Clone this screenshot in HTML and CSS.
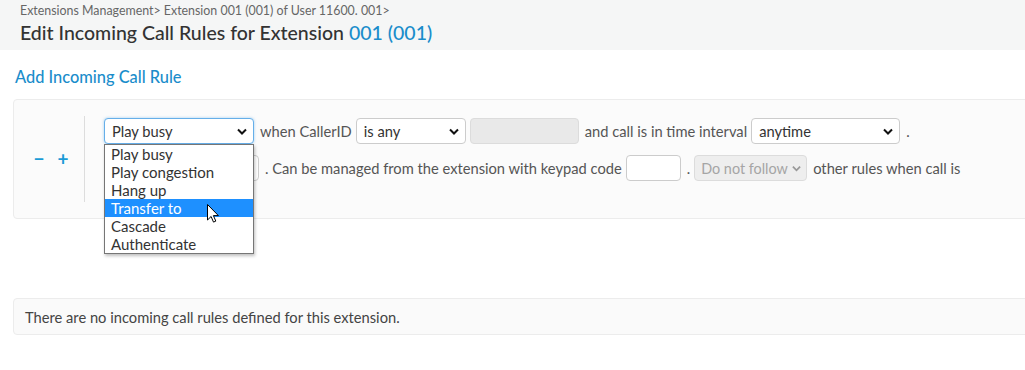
FILE: index.html
```html
<!DOCTYPE html>
<html lang="en">
<head>
    <meta charset="UTF-8">
    <meta name="viewport" content="width=device-width, initial-scale=1.0">
    <title>Edit Incoming Call Rules</title>
    <link rel="stylesheet" href="styles.css">
</head>
<body>
    <div class="page-header">
        <div class="breadcrumb">Extensions Management&gt; Extension 001 (001) of User 11600. 001&gt;</div>
        <h1 class="page-title">Edit Incoming Call Rules for Extension <span class="accent">001 (001)</span></h1>
    </div>

    <div class="content">
        <h2 class="section-title">Add Incoming Call Rule</h2>

        <div class="rule-panel">
            <div class="rule-controls">
                <span class="ctrl">&minus;</span>
                <span class="ctrl">+</span>
            </div>
            <div class="rule-body">
                <div class="rule-row">
                    <div class="select select-focus select-action">
                        <span>Play busy</span>
                        <svg class="chev" viewBox="0 0 10 6"><path d="M1 1l4 4 4-4" /></svg>
                    </div>
                    <span class="label">when CallerID</span>
                    <div class="select select-callerid">
                        <span>is any</span>
                        <svg class="chev" viewBox="0 0 10 6"><path d="M1 1l4 4 4-4" /></svg>
                    </div>
                    <div class="input input-disabled input-callerid"></div>
                    <span class="label">and call is in time interval</span>
                    <div class="select select-interval">
                        <span>anytime</span>
                        <svg class="chev" viewBox="0 0 10 6"><path d="M1 1l4 4 4-4" /></svg>
                    </div>
                    <span class="label">.</span>
                </div>
                <div class="rule-row">
                    <div class="select select-target"></div>
                    <span class="label">. Can be managed from the extension with keypad code</span>
                    <div class="input input-code"></div>
                    <span class="label">.</span>
                    <div class="select select-disabled select-follow">
                        <span>Do not follow</span>
                        <svg class="chev" viewBox="0 0 10 6"><path d="M1 1l4 4 4-4" /></svg>
                    </div>
                    <span class="label">other rules when call is</span>
                </div>

                <!-- open dropdown of the action select -->
                <ul class="dropdown">
                    <li>Play busy</li>
                    <li>Play congestion</li>
                    <li>Hang up</li>
                    <li class="active">Transfer to</li>
                    <li>Cascade</li>
                    <li>Authenticate</li>
                </ul>
                <svg class="cursor" viewBox="0 0 12 19" width="12" height="19">
                    <path d="M0.5 0.5v15.5l3.6-3.5 2.4 5.6 2.3-1-2.4-5.5h5z" fill="#fff" stroke="#000" stroke-width="1" stroke-linejoin="round" />
                </svg>
            </div>
        </div>

        <div class="empty-box">There are no incoming call rules defined for this extension.</div>
    </div>
</body>
</html>
```

FILE: styles.css
```css
/* Global styles */
body {
    margin: 0;
    padding: 0;
    font-family: 'Lato', 'Noto Sans', sans-serif;
    color: #555;
    background: #fff;
    overflow: hidden;
}

/* Header */
.page-header {
    background-color: #f5f6f6;
    height: 50px;
    padding: 3px 20px 0;
    box-sizing: border-box;
}

.breadcrumb {
    font-size: 12.4px;
    color: #666;
    line-height: 16px;
}

.page-title {
    margin: 2px 0 0;
    font-size: 19.5px;
    font-weight: 500;
    color: #333;
    line-height: 24px;
}

.accent {
    color: #1a8dcb;
}

/* Content */
.content {
    padding: 0 0 0 13px;
}

.section-title {
    margin: 17px 0 0 2px;
    font-size: 16.4px;
    font-weight: 500;
    color: #1a8dcb;
    line-height: 20px;
}

.rule-panel {
    margin-top: 12px;
    margin-right: -20px;
    height: 120px;
    box-sizing: border-box;
    background-color: #fbfbfb;
    border: 1px solid #ececec;
    border-radius: 4px;
    display: flex;
    align-items: flex-start;
    padding-top: 16px;
}

.rule-controls {
    width: 71px;
    height: 86px;
    border-right: 1px solid #ddd;
    display: flex;
    align-items: center;
    justify-content: center;
    gap: 13px;
    padding-left: 4px;
    box-sizing: border-box;
}

.ctrl {
    color: #1a9ad6;
    font-size: 19px;
    font-weight: bold;
    line-height: 20px;
}

.rule-body {
    position: relative;
    padding-left: 19px;
    padding-top: 2px;
    display: flex;
    flex-direction: column;
    gap: 11px;
}

.rule-row {
    display: flex;
    align-items: center;
    gap: 4px;
    white-space: nowrap;
    height: 26px;
}

.label {
    font-size: 14.7px;
    color: #555;
    padding: 0 0 0 2px;
}

/* Form controls */
.select,
.input {
    height: 26px;
    box-sizing: border-box;
    border: 1px solid #ccc;
    border-radius: 4px;
    background: #fff;
    display: flex;
    align-items: center;
    justify-content: space-between;
    padding: 0 6px 0 7px;
    font-size: 14.7px;
    color: #333;
}

.chev {
    width: 10px;
    height: 7px;
    fill: none;
    stroke: #111;
    stroke-width: 2;
}

.select-focus {
    border-color: #66afe9;
    box-shadow: 0 0 3px rgba(102, 175, 233, 0.6);
}

.select-action { width: 150px; }
.select-callerid { width: 110px; }
.input-callerid { width: 109px; }
.select-interval { width: 149px; }
.select-target { width: 155px; }
.input-code { width: 55px; }
.select-follow { width: 113px; }

.input-disabled {
    background: #e9e9e9;
    border-color: #dcdcdc;
}

.select-disabled {
    background: #eee;
    border-color: #dcdcdc;
    color: #a5a5a5;
    padding: 0 5px 0 6px;
    font-size: 14.4px;
}

.select-disabled .chev {
    stroke: #999;
    width: 9px;
}

/* Open dropdown list */
.dropdown {
    position: absolute;
    left: 19px;
    top: 28px;
    width: 150px;
    box-sizing: border-box;
    margin: 0;
    padding: 0;
    list-style: none;
    background: #fff;
    border: 1px solid #767676;
    box-shadow: 1px 2px 3px rgba(0, 0, 0, 0.25);
}

.dropdown li {
    height: 18px;
    line-height: 18px;
    padding-left: 6px;
    font-size: 15px;
    color: #333;
}

.dropdown li.active {
    background: #1e90ff;
    color: #fff;
}

.cursor {
    position: absolute;
    left: 122px;
    top: 88px;
}

/* Empty state */
.empty-box {
    margin-top: 79px;
    margin-right: -20px;
    height: 37px;
    box-sizing: border-box;
    background-color: #fafafa;
    border: 1px solid #ececec;
    border-radius: 4px;
    padding: 0 11px;
    display: flex;
    align-items: center;
    font-size: 14.7px;
    color: #444;
}
```
